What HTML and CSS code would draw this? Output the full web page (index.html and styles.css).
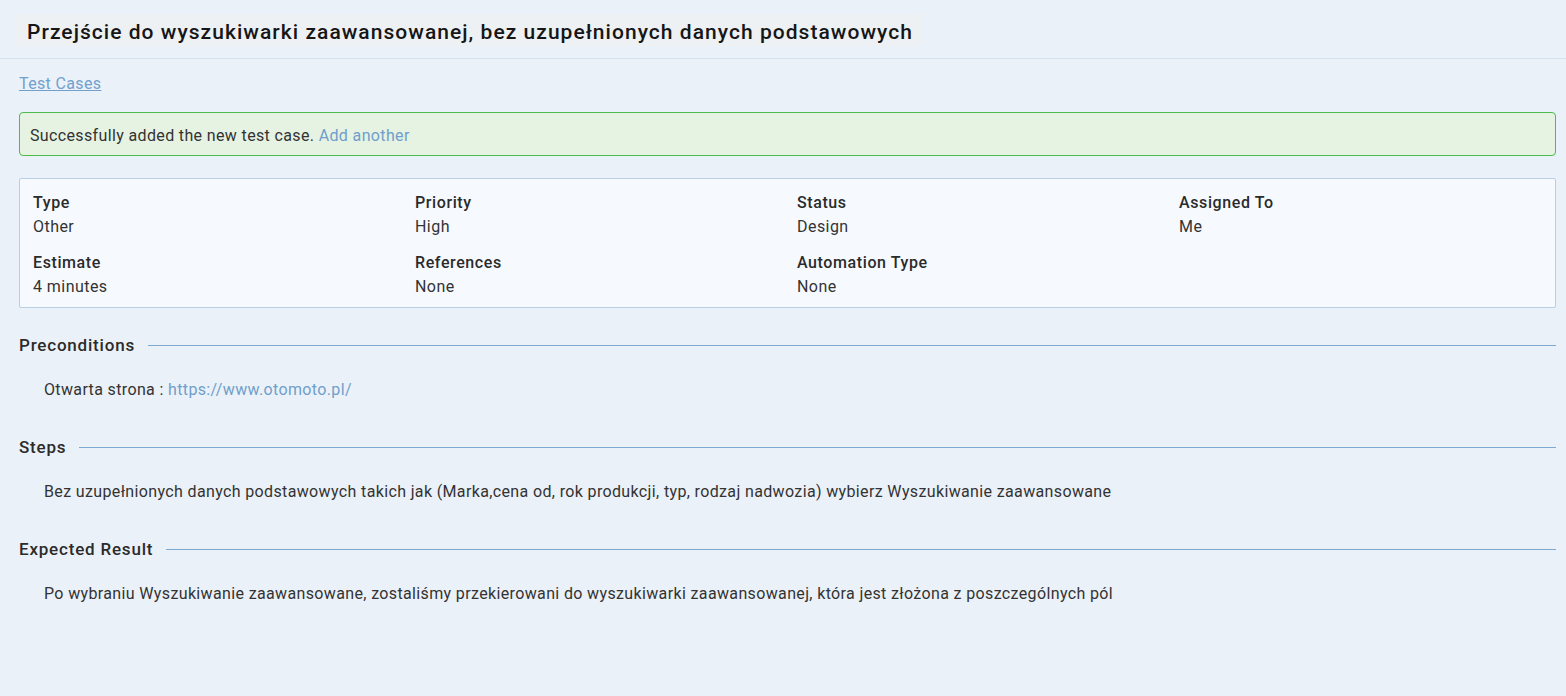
FILE: index.html
```html
<!DOCTYPE html>
<html lang="pl">
<head>
<meta charset="utf-8">
<title>Test case</title>
<link rel="stylesheet" href="styles.css">
</head>
<body>
<header class="page-header">
  <h1 class="title">Przejście do wyszukiwarki zaawansowanej, bez uzupełnionych danych podstawowych</h1>
</header>
<main class="content">
  <a class="crumb" href="#">Test Cases</a>
  <div class="alert">Successfully added the new test case. <a href="#" class="alert-link">Add another</a></div>
  <div class="info">
    <div class="field"><div class="label">Type</div><div class="value">Other</div></div>
    <div class="field"><div class="label">Priority</div><div class="value">High</div></div>
    <div class="field"><div class="label">Status</div><div class="value">Design</div></div>
    <div class="field"><div class="label">Assigned To</div><div class="value">Me</div></div>
    <div class="field"><div class="label">Estimate</div><div class="value">4 minutes</div></div>
    <div class="field"><div class="label">References</div><div class="value">None</div></div>
    <div class="field"><div class="label">Automation Type</div><div class="value">None</div></div>
  </div>
  <section class="section">
    <h2 class="section-title"><span>Preconditions</span></h2>
    <p class="section-text">Otwarta strona : <a href="#" class="text-link">https://www.otomoto.pl/</a></p>
  </section>
  <section class="section">
    <h2 class="section-title"><span>Steps</span></h2>
    <p class="section-text">Bez uzupełnionych danych podstawowych takich jak (Marka,cena od, rok produkcji, typ, rodzaj nadwozia) wybierz Wyszukiwanie zaawansowane</p>
  </section>
  <section class="section">
    <h2 class="section-title"><span>Expected Result</span></h2>
    <p class="section-text">Po wybraniu Wyszukiwanie zaawansowane, zostaliśmy przekierowani do wyszukiwarki zaawansowanej, która jest złożona z poszczególnych pól</p>
  </section>
</main>
</body>
</html>
```

FILE: styles.css
```css
* { box-sizing: border-box; }
html, body { margin: 0; padding: 0; }
body {
  background: #ebf1f8;
  font-family: Roboto, "Liberation Sans", sans-serif;
  color: #333333;
  font-size: 16px;
  letter-spacing: 0.36px;
}
.page-header {
  height: 59px;
  border-bottom: 1px solid #d2e2ef;
  padding: 14px 0 0 16px;
}
.title {
  display: inline-block;
  margin: 0;
  padding: 3px 9px 0 11px;
  height: 32px;
  background: #eef1f4;
  font-size: 21px;
  font-weight: 500;
  color: #161616;
  line-height: 30px;
  letter-spacing: 1.04px;
}
.content {
  padding: 14px 10px 0 19px;
}
.crumb {
  display: inline-block;
  color: #72a0cc;
  font-size: 16px;
  line-height: 22px;
  text-decoration: underline;
}
.alert {
  margin-top: 17px;
  height: 44px;
  border: 1px solid #4dbb4f;
  border-radius: 4px;
  background: #e6f2e2;
  padding: 3px 10px 0;
  line-height: 39px;
  font-size: 16px;
  color: #333;
}
.alert-link { color: #6f9fcb; text-decoration: none; }
.info {
  margin-top: 22px;
  border: 1px solid #b6cfe2;
  border-radius: 2px;
  background: #f6faff;
  display: grid;
  grid-template-columns: repeat(4, 382px);
  align-content: start;
  row-gap: 13px;
  padding: 13px 0 0 13px;
  height: 130px;
}
.label {
  font-weight: 500;
  font-size: 16px;
  line-height: 22px;
  color: #2b2b2b;
  letter-spacing: 0.6px;
}
.value {
  margin-top: 1px;
  font-size: 16px;
  line-height: 24px;
  color: #333;
  letter-spacing: 0.45px;
}
.section {
  margin-top: 25px;
}
.section + .section { margin-top: 34px; }
.section-title {
  margin: 0;
  display: flex;
  align-items: center;
  gap: 13px;
  font-size: 17px;
  font-weight: 500;
  line-height: 24px;
  color: #2b2b2b;
  letter-spacing: 0.8px;
}
.section-title::after {
  content: "";
  flex: 1;
  height: 1px;
  background: #7eaad2;
}
.section-text {
  margin: 22px 0 0 25px;
  font-size: 16px;
  line-height: 22px;
  color: #333;
}
.text-link { color: #6f9fcb; text-decoration: none; }
```
